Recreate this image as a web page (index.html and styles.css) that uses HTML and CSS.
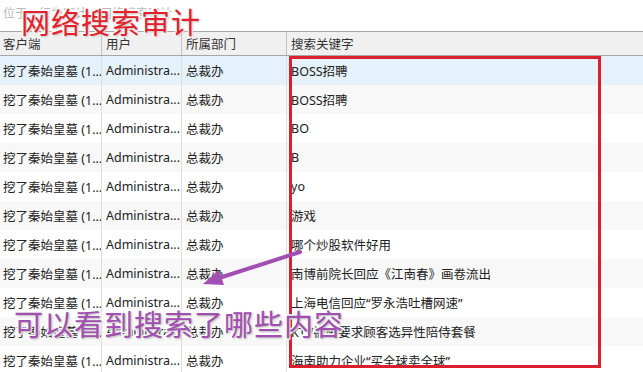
FILE: index.html
```html
<!DOCTYPE html>
<html lang="zh-CN">
<head>
    <meta charset="UTF-8">
    <title>网络搜索审计</title>
    <link rel="stylesheet" href="styles.css">
</head>
<body>
    <div class="page">
        <div class="crumb">位于：行为审计 &gt; 网络搜索审计</div>

        <div class="grid">
            <div class="row head">
                <div class="cell c1">客户端</div>
                <div class="cell c2">用户</div>
                <div class="cell c3">所属部门</div>
                <div class="cell c4">搜索关键字</div>
            </div>
            <div class="row sel">
                <div class="cell c1">挖了秦始皇墓 (1...</div>
                <div class="cell c2">Administra...</div>
                <div class="cell c3">总裁办</div>
                <div class="cell c4">BOSS招聘</div>
            </div>
            <div class="row">
                <div class="cell c1">挖了秦始皇墓 (1...</div>
                <div class="cell c2">Administra...</div>
                <div class="cell c3">总裁办</div>
                <div class="cell c4">BOSS招聘</div>
            </div>
            <div class="row">
                <div class="cell c1">挖了秦始皇墓 (1...</div>
                <div class="cell c2">Administra...</div>
                <div class="cell c3">总裁办</div>
                <div class="cell c4">BO</div>
            </div>
            <div class="row">
                <div class="cell c1">挖了秦始皇墓 (1...</div>
                <div class="cell c2">Administra...</div>
                <div class="cell c3">总裁办</div>
                <div class="cell c4">B</div>
            </div>
            <div class="row">
                <div class="cell c1">挖了秦始皇墓 (1...</div>
                <div class="cell c2">Administra...</div>
                <div class="cell c3">总裁办</div>
                <div class="cell c4">yo</div>
            </div>
            <div class="row">
                <div class="cell c1">挖了秦始皇墓 (1...</div>
                <div class="cell c2">Administra...</div>
                <div class="cell c3">总裁办</div>
                <div class="cell c4">游戏</div>
            </div>
            <div class="row">
                <div class="cell c1">挖了秦始皇墓 (1...</div>
                <div class="cell c2">Administra...</div>
                <div class="cell c3">总裁办</div>
                <div class="cell c4">哪个炒股软件好用</div>
            </div>
            <div class="row">
                <div class="cell c1">挖了秦始皇墓 (1...</div>
                <div class="cell c2">Administra...</div>
                <div class="cell c3">总裁办</div>
                <div class="cell c4">南博前院长回应《江南春》画卷流出</div>
            </div>
            <div class="row">
                <div class="cell c1">挖了秦始皇墓 (1...</div>
                <div class="cell c2">Administra...</div>
                <div class="cell c3">总裁办</div>
                <div class="cell c4">上海电信回应“罗永浩吐槽网速”</div>
            </div>
            <div class="row">
                <div class="cell c1">挖了秦始皇墓 (1...</div>
                <div class="cell c2">Administra...</div>
                <div class="cell c3">总裁办</div>
                <div class="cell c4">KTV被曝要求顾客选异性陪侍套餐</div>
            </div>
            <div class="row">
                <div class="cell c1">挖了秦始皇墓 (1...</div>
                <div class="cell c2">Administra...</div>
                <div class="cell c3">总裁办</div>
                <div class="cell c4">海南助力企业“买全球卖全球”</div>
            </div>
        </div>

        <!-- 标注 -->
        <div class="title">网络搜索审计</div>
        <div class="box"></div>
        <svg class="arrow" width="643" height="372" viewBox="0 0 643 372">
            <line x1="300" y1="252" x2="216" y2="279" stroke="#a24fb3" stroke-width="4" stroke-linecap="round"/>
            <polygon points="203,284 219,270 224,285" fill="#a24fb3"/>
        </svg>
        <div class="note">可以看到搜索了哪些内容</div>
    </div>
</body>
</html>
```

FILE: styles.css
```css
body {
    margin: 0;
    background-color: white;
    font-family: "Noto Sans", "Noto Sans CJK SC", sans-serif;
    font-size: 12.5px;
    color: #222;
}

.page {
    position: relative;
    width: 643px;
    height: 372px;
    overflow: hidden;
}

.crumb {
    height: 31px;
    padding: 4px 0 0 3px;
    box-sizing: border-box;
    color: #b8b8b8;
    font-size: 12px;
}

.grid {
    display: flex;
    flex-direction: column;
}

.row {
    display: flex;
    height: 29px;
    align-items: stretch;
}

.row:nth-child(odd) {
    background-color: #f8f8f8;
}

.row.sel {
    background-color: #e5f1fb;
}

.row.head {
    height: 25px;
    background-color: #f0f0f0;
    border-top: 1px solid #a6a6a6;
    border-bottom: 1px solid #a6a6a6;
    box-sizing: border-box;
}

.cell {
    display: flex;
    align-items: center;
    white-space: nowrap;
    overflow: hidden;
    box-sizing: border-box;
    border-right: 1px solid #dedede;
}

.head .cell {
    border-right-color: #c4c4c4;
    color: #333;
}

.c1 { width: 102px; padding-left: 3px; }
.c2 { width: 80px; padding-left: 4px; }
.c3 { width: 105px; padding-left: 4px; }
.c4 { flex: 1; padding-left: 4px; border-right: none; }

.title {
    position: absolute;
    left: 21px;
    top: 0;
    font-size: 29px;
    letter-spacing: 1px;
    color: #e3202b;
    -webkit-text-stroke: 3px white;
    paint-order: stroke fill;
    text-shadow: 1px 1px 2px rgba(0,0,0,0.25);
}

.box {
    position: absolute;
    left: 289px;
    top: 56px;
    width: 312px;
    height: 312px;
    border: 3px solid #dc1f2c;
    box-sizing: border-box;
}

.arrow {
    position: absolute;
    left: 0;
    top: 0;
}

.note {
    position: absolute;
    left: 14px;
    top: 302px;
    font-size: 29px;
    letter-spacing: 1px;
    color: #a14fb0;
    -webkit-text-stroke: 3px white;
    paint-order: stroke fill;
    text-shadow: 1px 1px 2px rgba(0,0,0,0.3);
}
```
